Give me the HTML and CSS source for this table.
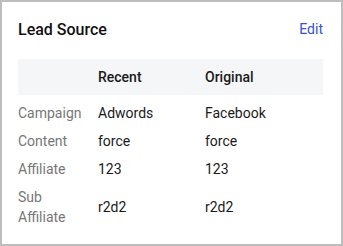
FILE: index.html
```html
<!DOCTYPE html>
<html>
<head>
<meta charset="utf-8">
<link rel="stylesheet" href="styles.css">
</head>
<body>
<div class="card">
  <div class="card-head">
    <div class="title">Lead Source</div>
    <a class="edit">Edit</a>
  </div>
  <div class="table">
    <div class="row head">
      <div class="cell"></div>
      <div class="cell">Recent</div>
      <div class="cell">Original</div>
    </div>
    <div class="body">
      <div class="row">
        <div class="cell label">Campaign</div>
        <div class="cell">Adwords</div>
        <div class="cell">Facebook</div>
      </div>
      <div class="row">
        <div class="cell label">Content</div>
        <div class="cell">force</div>
        <div class="cell">force</div>
      </div>
      <div class="row">
        <div class="cell label">Affiliate</div>
        <div class="cell">123</div>
        <div class="cell">123</div>
      </div>
      <div class="row">
        <div class="cell label">Sub Affiliate</div>
        <div class="cell">r2d2</div>
        <div class="cell">r2d2</div>
      </div>
    </div>
  </div>
</div>
</body>
</html>
```
FILE: styles.css
```css
html, body {
  margin: 0;
  padding: 0;
}
body {
  font-family: Roboto, "Liberation Sans", sans-serif;
  color: #1a1a1a;
  background: #fff;
}
.card {
  box-sizing: border-box;
  width: 343px;
  height: 246px;
  border: 2px solid #bdbdbd;
  padding: 15px 18px 13px 16px;
}
.card-head {
  display: flex;
  justify-content: space-between;
  align-items: center;
  height: 24px;
  margin-bottom: 18px;
}
.title {
  font-size: 16px;
  font-weight: 500;
  color: #111;
}
.edit {
  font-size: 14px;
  color: #3650d6;
  cursor: pointer;
}
.row {
  display: grid;
  grid-template-columns: 80px 107px 1fr;
  align-items: center;
  font-size: 14px;
  line-height: 20px;
  padding: 4px 0;
}
.row.head {
  background: #f5f6f8;
  height: 36px;
  box-sizing: border-box;
  padding: 0;
  font-weight: 500;
  margin-bottom: 4px;
}
.label {
  color: #777;
  padding-right: 8px;
}
```
